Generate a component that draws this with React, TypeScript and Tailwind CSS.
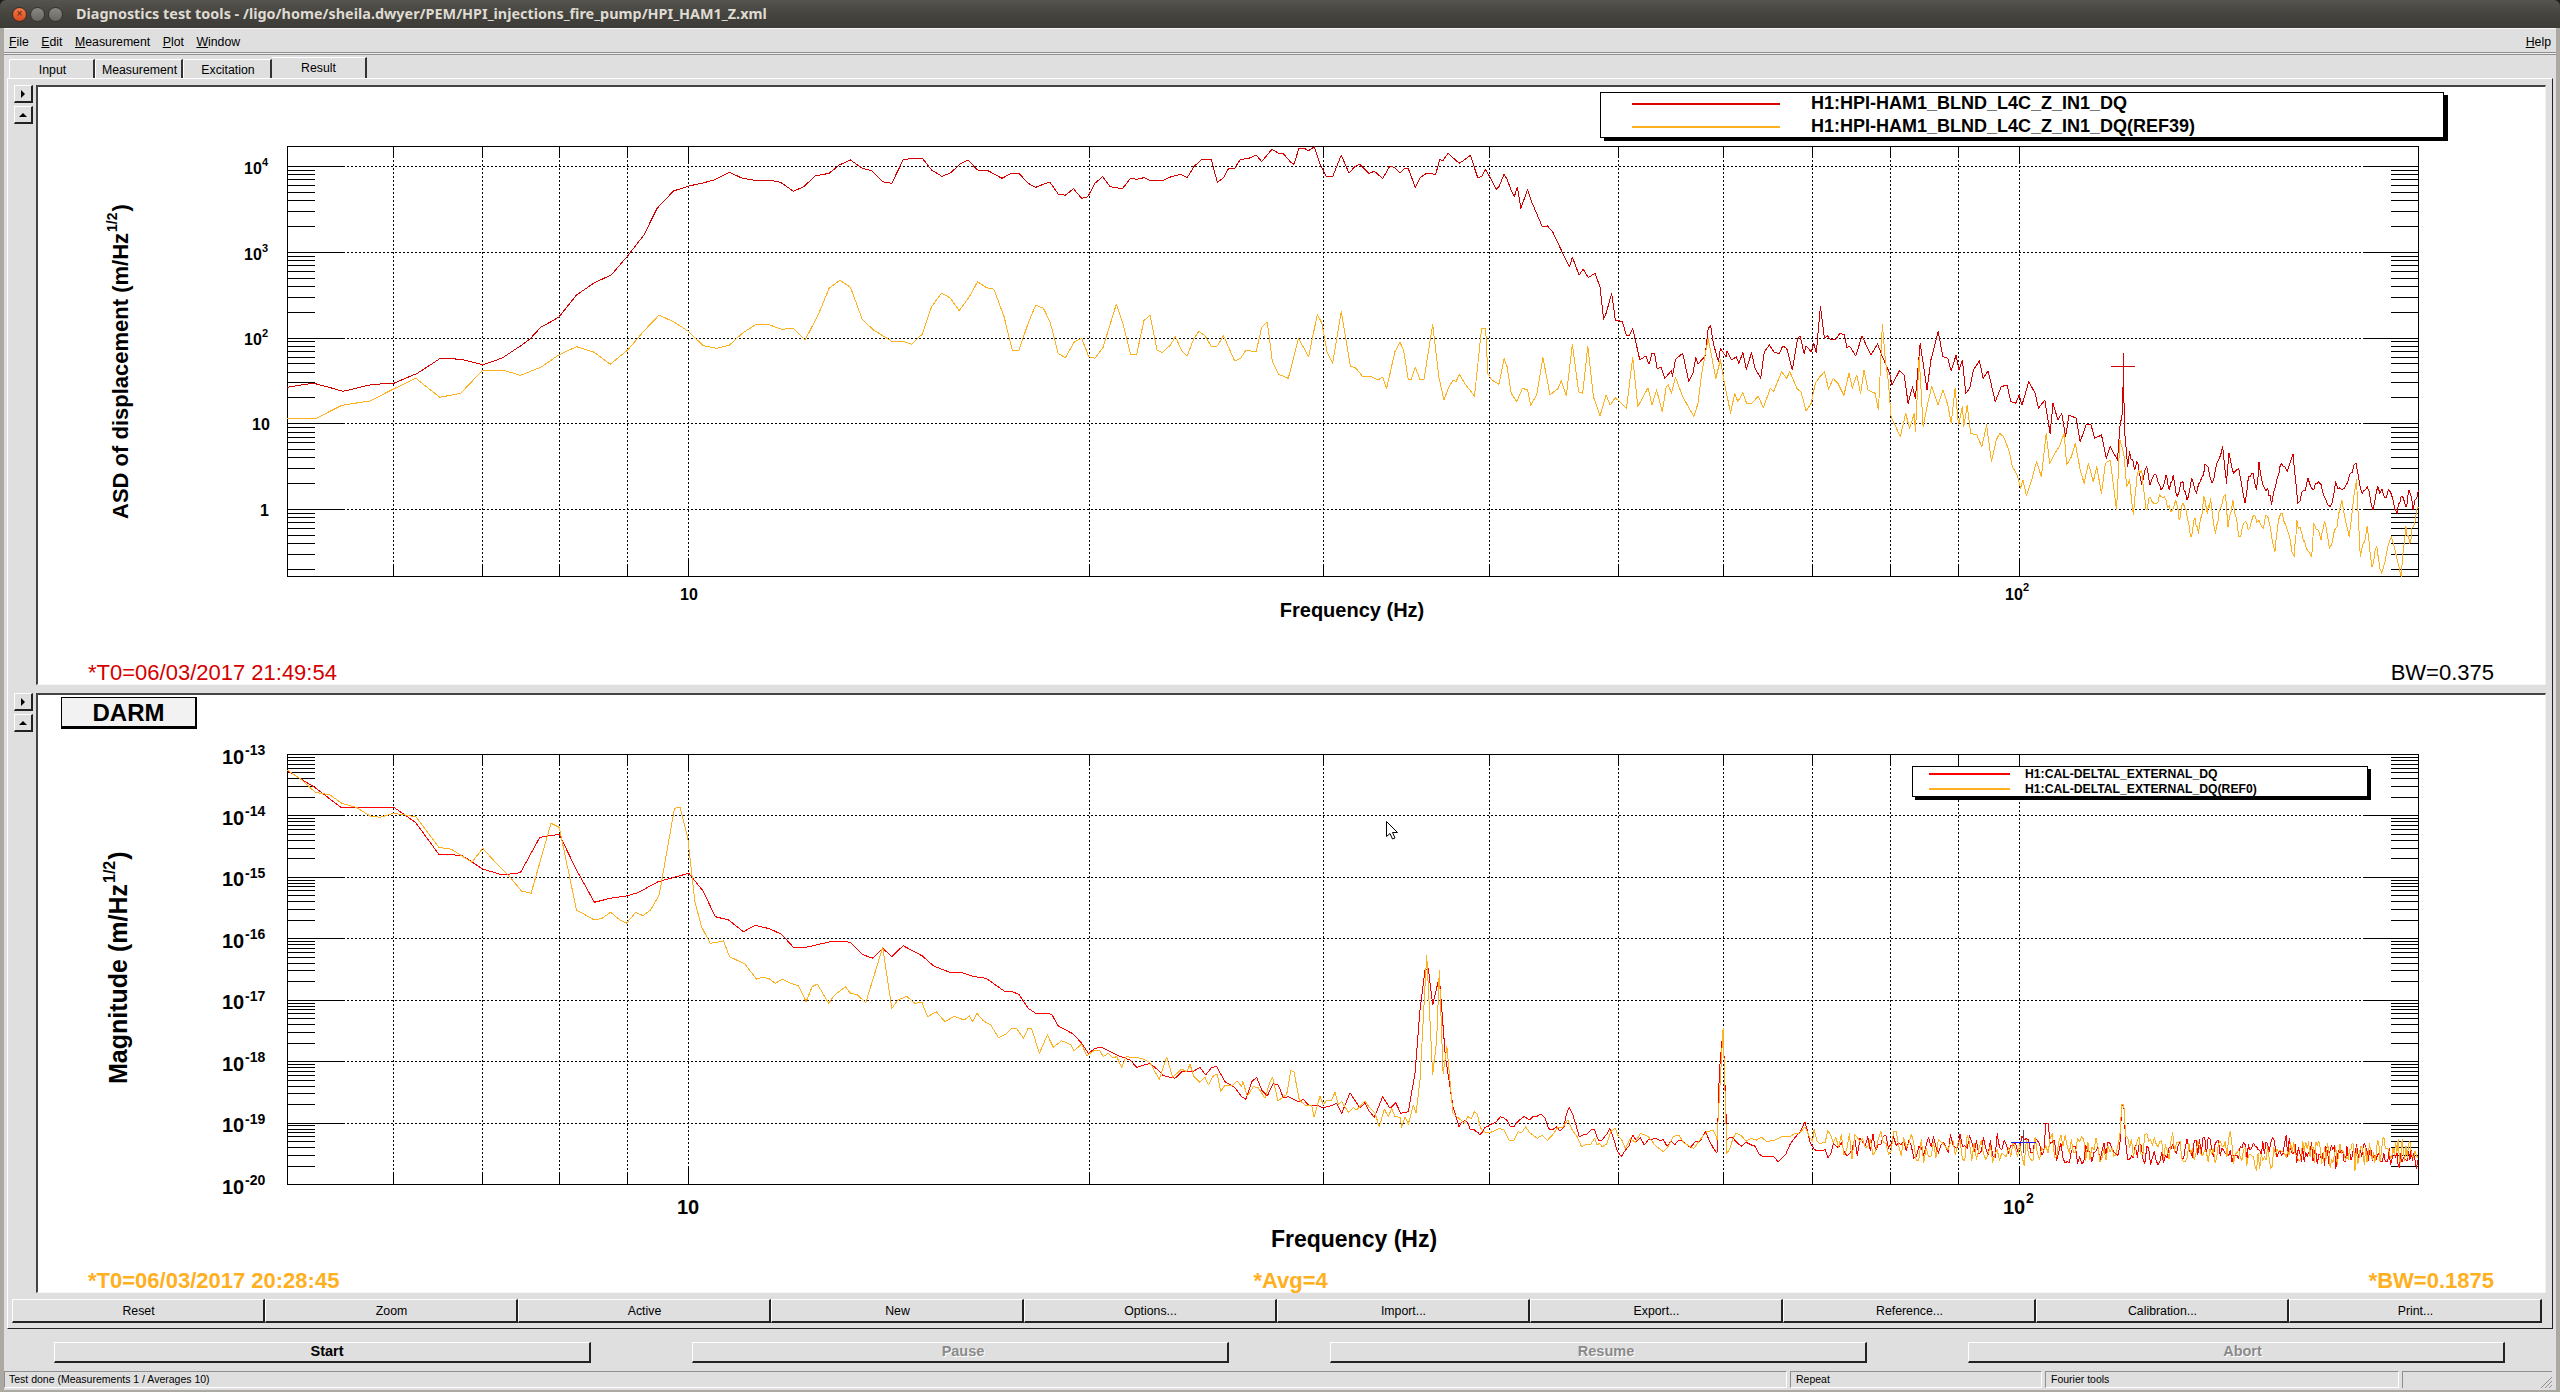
import React from "react";

const conv = (ox: number, oy: number, sx: number, sy: number, a: number[]) => {
  const out: string[] = [];
  for (let i = 0; i < a.length; i += 2) out.push(`${(ox + a[i] / sx).toFixed(1)},${(oy + a[i + 1] / sy).toFixed(1)}`);
  return out.join(" ");
};

const makeRnd = (seed: number) => {
  let s = seed;
  return () => {
    s = (s + 0x6d2b79f5) | 0;
    let t = Math.imul(s ^ (s >>> 15), 1 | s);
    t = (t + Math.imul(t ^ (t >>> 7), 61 | t)) ^ t;
    return ((t ^ (t >>> 14)) >>> 0) / 4294967296;
  };
};

const densify = (a: number[], fromX: number, amp: number, seed: number) => {
  const rnd = makeRnd(seed);
  const out: number[] = [];
  for (let i = 0; i < a.length; i += 2) {
    out.push(a[i], a[i + 1]);
    if (i + 3 < a.length && a[i] >= fromX && Math.abs(a[i + 3] - a[i + 1]) < 200) {
      const dx = a[i + 2] - a[i];
      const dy = a[i + 3] - a[i + 1];
      for (const t of [0.33, 0.66]) out.push(a[i] + dx * t, a[i + 1] + dy * t + (rnd() - 0.5) * amp);
    }
  }
  return out;
};

const R1 = [73,772,100,765,125,760,155,772,182,784,205,776,230,766,255,762,282,760,305,745,328,730,350,708,372,686,390,686,415,688,440,698,456,704,475,695,495,683,530,648,548,628,570,592,590,575,606,560,640,495,675,458,708,435,740,378,772,315,798,235,830,183,860,168,885,160,910,150,940,127,965,145,990,151,1020,151,1040,157,1065,184,1085,170,1108,138,1135,130,1155,105,1177,90,1200,115,1218,122,1240,155,1258,160,1280,90,1297,85,1318,85,1336,120,1356,139,1372,130,1392,102,1407,90,1426,120,1444,120,1474,145,1490,132,1507,130,1525,160,1540,172,1560,160];
const R2 = [0,157,16,192,30,196,46,176,62,205,74,200,88,160,103,140,118,170,142,176,158,145,170,148,184,143,196,151,222,151,234,142,256,133,269,143,282,110,296,90,316,88,328,157,340,143,350,115,362,115,373,88,388,86,404,75,415,95,435,58,448,70,458,72,472,97,478,103,488,55,498,55,507,62,518,50,530,105,542,140,554,140,571,75,586,130,597,110,607,103,625,130,636,124,652,146,666,108,676,113,686,130,695,115,702,115,716,172,726,142,738,130,756,133,764,88,770,92,780,70,802,100,812,90,824,76,838,142,846,140,854,118,875,178,880,170,890,133,896,148,905,185,910,200,916,172,923,235,936,178,944,215,965,290,975,288,985,305,1005,370,1018,410,1024,382,1037,435,1045,418,1055,443,1068,430,1078,470,1085,568,1090,550,1101,490,1108,570,1122,575,1130,617,1136,615,1142,595,1156,690,1168,678,1174,703,1180,670,1185,672,1190,715,1198,713,1205,745,1218,722,1220,740,1226,688,1240,670,1252,755,1260,730,1266,682,1270,702,1284,678,1290,595,1295,587,1300,640,1310,695,1314,655,1325,680,1327,662,1336,690,1345,680,1350,700,1358,668,1365,718,1375,668,1382,715,1393,745,1400,665,1410,645,1420,668,1430,670,1436,648,1444,655,1455,720,1465,628,1470,617,1478,670,1482,648,1492,665,1497,640,1502,668,1510,530,1518,625,1524,618,1530,630,1540,628,1548,610,1557,615,1562,652,1568,650];
const R3 = [115,168,128,108,146,165,160,132,170,170,185,220,190,255,205,212,215,225,223,310,232,260,238,295,248,130,258,230,262,270,270,180,285,95,295,170,305,175,312,213,322,165,328,210,335,180,342,280,350,265,358,210,370,182,378,235,388,213,403,305,415,260,427,255,435,305,445,310,452,285,458,315,472,245,485,280,492,325,505,300,516,400,522,310,532,360,540,340,548,410,555,345,570,355,578,425,590,375,600,372,608,415,622,405,632,475,640,440,655,480,660,380,665,340,667,230,670,400,676,500,680,455,690,510,697,490,705,555,715,500,722,555,735,525,745,570,755,525,762,570,770,525,778,590,790,545,798,600,808,535,818,580,830,530,838,495,850,550,860,490,872,440,880,550,885,460,895,520,905,505,918,610,925,530,935,520,942,570,947,485,955,555,965,565,973,615,985,530,993,490,1005,515,1017,462,1027,610,1040,570,1048,535,1060,570,1070,545,1085,600,1094,620,1105,545,1118,570,1135,520,1147,490,1160,580,1170,560,1182,630,1192,560,1205,590,1218,575,1232,640,1240,590,1250,620,1256,570,1265,630,1276,570];
const O1 = [73,865,130,865,180,826,205,820,235,813,280,778,325,745,372,802,413,790,456,720,495,720,530,736,570,712,605,675,640,650,675,667,706,703,740,660,772,603,802,555,832,577,860,605,888,647,915,655,940,645,965,610,992,583,1015,583,1042,598,1065,595,1088,630,1115,550,1135,475,1156,451,1177,472,1200,568,1222,600,1258,634,1280,634,1297,643,1318,612,1336,530,1355,490,1372,503,1390,542,1410,500,1426,455,1444,473,1458,478,1478,560,1494,660,1507,662,1525,580,1540,525,1555,535];
const O2 = [0,575,16,670,30,683,48,635,62,625,76,680,88,685,104,652,130,523,142,575,158,673,170,673,184,572,196,556,210,660,220,668,236,645,246,620,258,662,269,678,282,625,292,604,304,618,316,648,328,648,340,617,362,693,374,685,384,660,404,666,415,592,426,576,436,695,448,733,467,745,487,625,507,680,524,553,533,580,543,665,554,700,571,545,589,710,598,712,612,738,628,738,642,750,652,742,660,775,676,665,686,637,693,660,702,748,708,748,716,712,725,748,733,748,750,583,762,740,772,810,782,770,790,750,796,755,802,733,815,765,832,798,846,595,854,597,858,730,866,750,880,763,890,685,896,710,904,790,915,815,926,775,936,780,942,826,954,795,966,682,980,795,996,775,1002,752,1012,797,1024,643,1036,785,1044,790,1054,648,1065,800,1078,858,1090,795,1098,825,1108,803,1130,835,1142,682,1152,830,1172,773,1180,825,1189,780,1200,845,1208,770,1212,765,1218,790,1226,742,1240,800,1262,860,1270,820,1278,725,1290,625,1305,745,1314,690,1322,760,1334,850,1342,790,1348,815,1358,788,1366,822,1376,820,1388,798,1398,833,1412,775,1418,785,1434,725,1444,745,1450,725,1465,778,1472,785,1482,843,1492,820,1500,760,1510,738,1518,725,1526,778,1535,745,1545,762,1556,796,1566,730];
const O3 = [108,265,117,225,125,282,132,210,140,270,155,280,162,330,170,72,176,180,182,240,188,350,207,410,218,340,226,385,236,340,238,395,246,170,254,380,265,300,272,258,285,315,295,270,305,315,312,370,320,265,327,375,335,320,338,380,345,315,352,400,365,405,375,440,385,375,395,485,405,420,412,400,420,410,432,455,438,500,448,525,455,565,460,540,467,587,478,540,488,485,498,530,508,400,515,490,528,455,535,440,545,400,550,495,560,470,568,430,578,510,586,550,595,490,605,545,612,500,622,580,630,490,640,480,653,630,660,420,668,460,674,560,680,540,688,645,695,530,705,510,714,630,722,590,735,610,745,590,755,600,765,635,775,600,782,660,790,610,800,660,808,710,815,655,822,700,833,590,840,640,847,595,857,700,865,630,878,585,883,680,893,600,905,710,918,665,928,685,938,645,952,680,965,650,980,755,985,680,995,640,1005,690,1020,770,1025,660,1035,700,1040,720,1055,770,1060,670,1075,720,1082,665,1092,745,1108,680,1118,600,1133,710,1148,540,1156,770,1170,680,1180,800,1190,740,1200,820,1220,710,1240,830,1250,680,1258,730,1265,680,1276,620];
const BR1 = [73,92,125,140,180,204,210,202,282,202,325,248,370,343,415,346,456,387,495,405,530,398,568,292,606,283,640,390,675,487,706,475,738,468,760,458,800,425,860,400,888,453,912,530,938,540,967,575,990,556,1018,566,1042,583,1065,622,1090,622,1135,606,1158,604,1177,607,1200,643,1220,655,1240,625,1258,650,1280,617,1318,648,1340,678,1370,696,1392,696,1420,710,1443,715,1478,753,1490,753,1507,763,1525,805,1540,820,1560,820];
const BR2 = [35,223,55,258,100,282,125,310,145,340,165,325,185,322,230,345,270,360,290,382,330,370,360,395,370,407,405,415,425,395,460,394,480,382,497,405,515,382,530,380,555,425,585,443,605,470,618,478,635,425,650,412,665,450,682,468,700,430,715,435,730,473,745,470,775,485,790,478,805,495,830,495,848,503,875,497,890,490,905,520,930,458,960,505,975,488,985,510,1003,532,1028,470,1050,505,1067,488,1082,520,1105,515,1125,400,1140,210,1155,90,1165,85,1178,195,1198,110];
const BR3 = [190,950,200,1100,208,1160,220,1150,228,1170,235,1185,245,1160,262,1130,275,1160,290,1135,300,1140,315,1122,330,1170,345,1160,352,1102,365,1190,380,1170,395,1200,405,1165,420,1250,435,1185,450,1215,465,1195,480,1220,495,1200,510,1222,530,1175,545,1240,548,1000,553,870,558,1200,570,1205,590,1215,605,1250,625,1265,640,1215,660,1145,670,1220];
const BO1 = [73,90,100,118,128,157,157,165,180,190,210,203,235,228,255,232,282,220,325,230,370,322,395,328,435,367,456,325,480,365,510,412,532,453,551,460,590,250,606,262,640,510,675,540,690,535,707,517,725,540,738,550,756,517,770,527,785,510,802,465,832,205,843,202,858,295,872,485,885,560,902,610,928,603,940,650,970,672,993,718,1003,712,1016,715,1030,730,1043,718,1060,730,1075,738,1090,785,1102,740,1112,732,1134,790,1146,765,1167,740,1177,760,1190,764,1207,788,1240,622,1258,805,1270,780,1287,769,1303,790,1317,787,1328,830,1345,815,1362,845,1380,829,1400,840,1410,828,1416,845,1425,820,1437,842,1452,855,1467,893,1482,882,1493,865,1502,865,1516,895,1525,865,1532,865,1547,940,1563,885];
const BO2 = [40,322,65,302,92,314,102,333,125,312,140,347,165,330,178,330,190,350,205,340,218,353,230,350,245,382,258,350,305,355,330,368,358,418,380,352,398,412,425,387,440,395,450,373,462,410,480,427,495,412,505,435,520,408,532,402,542,455,555,435,575,438,592,423,605,440,608,423,622,468,640,440,655,443,675,475,690,425,698,412,714,483,740,463,752,392,762,395,778,480,795,495,815,495,822,532,840,468,850,495,860,480,875,480,885,457,895,493,905,485,925,517,940,503,950,510,975,483,990,505,1005,520,1018,560,1033,508,1045,530,1055,505,1065,530,1080,532,1085,562,1095,530,1105,553,1120,495,1128,520,1140,420,1160,45,1178,405,1190,300,1198,90];
const BO3 = [187,1000,192,920,200,1120,215,1150,228,1115,240,1175,260,1165,280,1200,295,1160,310,1195,330,1185,350,1140,368,1220,385,1195,395,1220,412,1165,425,1225,445,1180,475,1235,495,1185,515,1225,540,1170,545,1200,553,865,558,1240,570,1180,590,1195,610,1205,640,1190,660,1160,670,1205];

const noise = (seed: number, spikes: number[][], amp: number) => {
  const rnd = makeRnd(seed);
  const pts: string[] = [];
  let x = 672;
  while (x < 1461) {
    const base = x < 900 ? 1215 + ((x - 670) / 230) * 10 : 1225 + ((x - 900) / 561) * 20;
    const kick = rnd() > 0.93 ? (rnd() - 0.5) * 60 : 0;
    let y = base + (rnd() - 0.5) * amp + kick + Math.sin(x / 17 + seed) * 9 + Math.sin(x / 61 + seed * 2) * 8;
    for (const [sx, sy] of spikes) if (Math.abs(x - sx) < 2.4) y = sy;
    pts.push(`${(1300 + x / 1.307).toFixed(1)},${(740 + y / 3).toFixed(1)}`);
    x += Math.max(1.7, 3.6 - (x - 670) * 0.0026);
  }
  return pts.join(" ");
};

const topRed = [conv(250, 130, 1.96, 3, R1), conv(1050, 130, 1.96, 3, R2), conv(1800, 300, 2.063, 3, densify(R3, 680, 26, 3))].join(" ");
const topOrange = [conv(250, 130, 1.96, 3, O1), conv(1050, 130, 1.96, 3, O2), conv(1800, 300, 2.063, 3, densify(O3, 680, 30, 5))].join(" ");
const botRed = [conv(250, 740, 1.96, 3, BR1), conv(1040, 940, 3, 3, BR2), conv(1300, 740, 1.307, 3, densify(BR3, 205, 26, 7)), noise(11, [[976, 1150], [1075, 1095]], 62)].join(" ");
const botOrange = [conv(250, 740, 1.96, 3, BO1), conv(1040, 940, 3, 3, BO2), conv(1300, 740, 1.307, 3, densify(BO3, 205, 30, 9)), noise(47, [[1075, 1092]], 78)].join(" ");

const X = (f: number) => Math.round(688 + Math.log10(f / 10) * 1330.5) + 0.5;
const FREQS = [6, 7, 8, 9, 10, 20, 30, 40, 50, 60, 70, 80, 90, 100];

function Axes({ top, bottom, decades }: { top: number; bottom: number; decades: number[] }) {
  let solid = `M287.5 ${top + 0.5}H2418.5V${bottom + 0.5}H287.5Z`;
  let dotted = "";
  const step = decades[1] - decades[0];
  decades.forEach((d, i) => {
    const y = Math.round(d) + 0.5;
    if (y > top + 1 && y < bottom - 1) {
      solid += `M287 ${y}H343M2364 ${y}H2418`;
      dotted += `M343 ${y}H2364`;
    }
    for (let m = 2; m <= 9; m++) {
      const my = Math.round(d + (1 - Math.log10(m)) * step) + 0.5;
      if (my > top + 1 && my < bottom - 1) solid += `M287 ${my}H315M2391 ${my}H2418`;
    }
    if (i === 0) {
      for (let m = 2; m <= 9; m++) {
        const my = Math.round(d - Math.log10(m) * step) + 0.5;
        if (my > top + 1) solid += `M287 ${my}H315M2391 ${my}H2418`;
      }
    }
  });
  FREQS.forEach((f) => {
    const x = X(f);
    const len = f === 10 || f === 100 ? 16 : 10;
    solid += `M${x} ${top}V${top + len}M${x} ${bottom}V${bottom - len}`;
    dotted += `M${x} ${top + len}V${bottom - len}`;
  });
  return (
    <g shapeRendering="crispEdges" fill="none" stroke="#000" strokeWidth={1}>
      <path d={dotted} strokeDasharray="2 2" />
      <path d={solid} />
    </g>
  );
}

function Curves({ id, top, bottom, red, orange, redColor }: { id: string; top: number; bottom: number; red: string; orange: string; redColor: string }) {
  return (
    <g>
      <clipPath id={id}>
        <rect x={287} y={top} width={2132} height={bottom - top + 1} />
      </clipPath>
      <g clipPath={`url(#${id})`} fill="none" strokeWidth={1} strokeLinejoin="round" shapeRendering="crispEdges">
        <polyline points={red} stroke={redColor} />
        <polyline points={orange} stroke="#ffb01f" />
      </g>
    </g>
  );
}

function Chart1() {
  const decades = [166, 251.75, 337.5, 423.25, 509];
  return (
    <svg width={2507} height={569} viewBox="38 87 2507 569" className="block shrink-0">
      <Axes top={146} bottom={576} decades={decades} />
      <Curves id="c1" top={146} bottom={576} red={topRed} orange={topOrange} redColor="#d40000" />
      <path d="M2111 366.5H2135M2123.5 353V377" stroke="#d40000" strokeWidth={1} shapeRendering="crispEdges" fill="none" />
      <g className="font-bold fill-black text-[16px]">
        <text x={244} y={174}>10</text>
        <text x={244} y={260}>10</text>
        <text x={244} y={345}>10</text>
        <text x={252} y={430}>10</text>
        <text x={260} y={516}>1</text>
        <text x={680} y={600}>10</text>
        <text x={2005} y={600}>10</text>
      </g>
      <g className="font-bold fill-black text-[11px]">
        <text x={262} y={166}>4</text>
        <text x={262} y={252}>3</text>
        <text x={262} y={337}>2</text>
        <text x={2023} y={591}>2</text>
      </g>
      <text x={1352} y={617} textAnchor="middle" className="font-bold fill-black text-[20px]">Frequency (Hz)</text>
      <text transform="translate(128 519) rotate(-90)" className="font-bold fill-black text-[22px]">
        ASD of displacement (m/Hz<tspan dx={1} dy={-11} className="text-[14px]">1/2</tspan><tspan dx={1} dy={11}>)</tspan>
      </text>
    </svg>
  );
}

function Chart2() {
  const decades = [754, 815.43, 876.86, 938.29, 999.71, 1061.14, 1122.57, 1184];
  const labels = decades.map((d, i) => ({ y: d, e: `-${13 + i}` }));
  return (
    <svg width={2507} height={569} viewBox="38 695 2507 569" className="block shrink-0">
      <Axes top={754} bottom={1184} decades={decades.slice(0, 7)} />
      <Curves id="c2" top={754} bottom={1184} red={botRed} orange={botOrange} redColor="#ff0000" />
      <path d="M2011 1142.5H2036" stroke="#1c1cff" strokeWidth={1} shapeRendering="crispEdges" fill="none" />
      <path d="M2023.5 1130V1153" stroke="#44506a" strokeWidth={1} shapeRendering="crispEdges" fill="none" />
      <path d="M1386.5 821.5V836.5L1390 833.5L1392.5 839L1395 838L1392.5 832.5L1397.5 832.5Z" fill="#fff" stroke="#000" strokeWidth={1} />
      {labels.map((l) => (
        <g key={l.e}>
          <text x={222} y={l.y + 9.5} className="font-bold fill-black text-[20px]">10</text>
          <text x={245} y={l.y + 1} className="font-bold fill-black text-[14px]">{l.e}</text>
        </g>
      ))}
      <g className="font-bold fill-black text-[20px]">
        <text x={677} y={1214}>10</text>
        <text x={2003} y={1214}>10</text>
      </g>
      <text x={2026} y={1203} className="font-bold fill-black text-[14px]">2</text>
      <text x={1354} y={1247} textAnchor="middle" className="font-bold fill-black text-[23px]">Frequency (Hz)</text>
      <text transform="translate(127 1084) rotate(-90)" className="font-bold fill-black text-[25px]">
        Magnitude (m/Hz<tspan dx={1} dy={-12} className="text-[16px]">1/2</tspan><tspan dx={1} dy={12}>)</tspan>
      </text>
    </svg>
  );
}

function TinyButton({ up }: { up?: boolean }) {
  return (
    <div className="h-[18px] w-[19px] flex items-center justify-center bg-[#dfdfdf] border-t border-l border-white border-r-2 border-b-2 border-r-[#222] border-b-[#222]">
      <svg width={8} height={10} viewBox="0 0 8 10">
        {up ? <polygon points="0,7 8,7 4,3" fill="#000" /> : <polygon points="2,1 6,5 2,9" fill="#000" />}
      </svg>
    </div>
  );
}

function Pane({ children }: { children: React.ReactNode }) {
  return (
    <div className="flex h-[600px] shrink-0 pl-[6px] pr-[6px]">
      <div className="w-[22px] shrink-0 flex flex-col gap-[3px]">
        <TinyButton />
        <TinyButton up />
      </div>
      <div className="relative flex-1 flex flex-col bg-white border-t-2 border-l-2 border-t-[#444] border-l-[#444] border-r border-b border-r-[#f4f4f4] border-b-[#f4f4f4]">
        {children}
      </div>
    </div>
  );
}

function LegendRow({ color, text, pl, w, gap, size }: { color: string; text: string; pl: string; w: string; gap: string; size: string }) {
  return (
    <div className={`flex items-center ${pl}`}>
      <div className={`h-[2px] shrink-0 ${w} ${color}`} />
      <div className={`font-bold text-black whitespace-nowrap ${gap} ${size}`}>{text}</div>
    </div>
  );
}

function RaisedButton({ label, className = "" }: { label: string; className?: string }) {
  return (
    <div className={`flex items-center justify-center bg-[#dfdfdf] border-t border-l border-t-white border-l-white border-r-2 border-b-2 border-r-[#222] border-b-[#222] ${className}`}>
      {label}
    </div>
  );
}

function U({ c, rest }: { c: string; rest: string }) {
  return (
    <span>
      <span className="underline">{c}</span>
      {rest}
    </span>
  );
}

function Tab({ label, w }: { label: string; w: string }) {
  return (
    <div className={`h-[19px] flex items-center justify-center pt-[2px] pl-[2px] text-[12.3px] text-black border-t border-l border-t-white border-l-white border-r-2 border-r-[#333] rounded-tl-[2px] ${w}`}>
      {label}
    </div>
  );
}

export default function App() {
  const buttons = ["Reset", "Zoom", "Active", "New", "Options...", "Import...", "Export...", "Reference...", "Calibration...", "Print..."];
  const disabled = "text-[#8a8a8a] [text-shadow:1px_1px_0_#fff]";
  const cell = "flex items-center border-t border-l border-t-[#8f8f8f] border-l-[#8f8f8f] border-b border-r border-b-white border-r-white";
  return (
    <div className="w-[2560px] h-[1392px] flex flex-col overflow-hidden bg-[#1e1e1c] [font-family:'Liberation_Sans',sans-serif] text-black">
      <div className="h-[28px] shrink-0 flex items-center rounded-t-[6px] bg-gradient-to-b from-[#55544f] via-[#45443f] to-[#3c3b37] pl-[12px]">
        <div className="w-[15px] h-[15px] rounded-full bg-gradient-to-b from-[#f2794a] to-[#d84a1c] border border-[#3a2a20] flex items-center justify-center text-[10px] leading-none text-[#5a1d08]">×</div>
        <div className="w-[15px] h-[15px] ml-[3px] rounded-full bg-gradient-to-b from-[#8a8881] to-[#6a6862] border border-[#33322e]" />
        <div className="w-[15px] h-[15px] ml-[3px] rounded-full bg-gradient-to-b from-[#8a8881] to-[#6a6862] border border-[#33322e]" />
        <div className="ml-[13px] text-[14.4px] font-bold text-[#dfdbd2] whitespace-nowrap [font-family:'Noto_Sans',sans-serif]">
          Diagnostics test tools - /ligo/home/sheila.dwyer/PEM/HPI_injections_fire_pump/HPI_HAM1_Z.xml
        </div>
      </div>
      <div className="flex-1 flex flex-col bg-[#dfdfdf] border-l-4 border-r-4 border-b-2 border-[#aca8a2]">
        <div className="h-[24px] shrink-0 flex items-center gap-[12.5px] pt-[3px] pl-[5px] pr-[5px] text-[12.3px] border-t border-t-[#f4f4f4]">
          <U c="F" rest="ile" />
          <U c="E" rest="dit" />
          <U c="M" rest="easurement" />
          <U c="P" rest="lot" />
          <U c="W" rest="indow" />
          <div className="ml-auto"><U c="H" rest="elp" /></div>
        </div>
        <div className="h-[3px] shrink-0 border-t border-b border-[#8f8f8f] bg-[#eeeeee]" />
        <div className="h-[23px] shrink-0 flex items-end pl-[5px]">
          <Tab label="Input" w="w-[86px]" />
          <Tab label="Measurement" w="w-[88px]" />
          <Tab label="Excitation" w="w-[89px]" />
          <div className="h-[21px] w-[95px] flex items-center justify-center text-[12.3px] border-t border-t-white border-r-2 border-r-[#333]">Result</div>
        </div>
        <div className="h-[1251px] shrink-0 mx-[3px] flex flex-col pt-[6px] border-t border-l border-t-white border-l-white border-r border-b border-r-[#222] border-b-[#222]">
          <Pane>
            <Chart1 />
            <div className="flex-1 flex items-center justify-between pb-[4px] pl-[50px] pr-[51px] text-[22px]">
              <span className="text-[#d40000]">*T0=06/03/2017 21:49:54</span>
              <span>BW=0.375</span>
            </div>
            <div className="absolute left-[1562px] top-[5px] w-[844px] h-[46px] bg-white border border-black shadow-[4px_3px_0_#000] flex flex-col justify-center">
              <LegendRow color="bg-[#e00000]" text="H1:HPI-HAM1_BLND_L4C_Z_IN1_DQ" pl="pl-[31px]" w="w-[148px]" gap="ml-[31px] leading-[23px]" size="text-[18px]" />
              <LegendRow color="bg-[#ffb01f]" text="H1:HPI-HAM1_BLND_L4C_Z_IN1_DQ(REF39)" pl="pl-[31px]" w="w-[148px]" gap="ml-[31px] leading-[23px]" size="text-[18px]" />
            </div>
          </Pane>
          <div className="h-[8px] shrink-0" />
          <Pane>
            <Chart2 />
            <div className="flex-1 flex items-center pb-[4px] pl-[50px] pr-[51px] text-[22px] font-bold text-[#ffb01f]">
              <span>*T0=06/03/2017 20:28:45</span>
              <span className="ml-[914px]">*Avg=4</span>
              <span className="ml-auto">*BW=0.1875</span>
            </div>
            <div className="absolute left-[23px] top-[2px] w-[136px] h-[32px] pt-[2px] bg-[#f2f2f2] border-t border-l border-black border-r-2 border-b-[3px] flex items-center justify-center text-[24px] font-bold">DARM</div>
            <div className="absolute left-[1874px] top-[71px] w-[456px] h-[31px] bg-white border border-black shadow-[3px_3px_0_#000] flex flex-col justify-center">
              <LegendRow color="bg-[#ff0000]" text="H1:CAL-DELTAL_EXTERNAL_DQ" pl="pl-[16px]" w="w-[81px]" gap="ml-[15px] leading-[15px]" size="text-[12.2px]" />
              <LegendRow color="bg-[#ffb01f]" text="H1:CAL-DELTAL_EXTERNAL_DQ(REF0)" pl="pl-[16px]" w="w-[81px]" gap="ml-[15px] leading-[15px]" size="text-[12.2px]" />
            </div>
          </Pane>
          <div className="flex mt-[6px] pl-[4px] pr-[10px] h-[24px] shrink-0">
            {buttons.map((b) => (
              <RaisedButton key={b} label={b} className="w-[253px] pl-[1px] pt-[2px] text-[12.3px]" />
            ))}
          </div>
        </div>
        <div className="h-[42px] shrink-0 flex items-start pt-[13px] pl-[50px] gap-[101px]">
          <RaisedButton label="Start" className="w-[537px] h-[21px] pl-[10px] text-[14.5px] font-bold" />
          <RaisedButton label="Pause" className={`w-[537px] h-[21px] pl-[6px] text-[14.5px] font-bold ${disabled}`} />
          <RaisedButton label="Resume" className={`w-[537px] h-[21px] pl-[16px] text-[14.5px] font-bold ${disabled}`} />
          <RaisedButton label="Abort" className={`w-[537px] h-[21px] pl-[13px] text-[14.5px] font-bold ${disabled}`} />
        </div>
        <div className="h-[17px] shrink-0 flex gap-[3px] text-[10.5px]">
          <div className={`w-[1783px] pl-[4px] ${cell}`}>Test done (Measurements 1 / Averages 10)</div>
          <div className={`w-[252px] pl-[5px] ${cell}`}>Repeat</div>
          <div className={`w-[354px] pl-[5px] ${cell}`}>Fourier tools</div>
          <div className="w-[150px] flex items-end justify-end border-t border-l border-t-[#8f8f8f] border-l-[#8f8f8f]">
            <svg width={12} height={12} viewBox="0 0 12 12">
              <path d="M1 12L12 1M5 12L12 5M9 12L12 9" stroke="#8f8f8f" strokeWidth={1} fill="none" />
            </svg>
          </div>
        </div>
      </div>
    </div>
  );
}
